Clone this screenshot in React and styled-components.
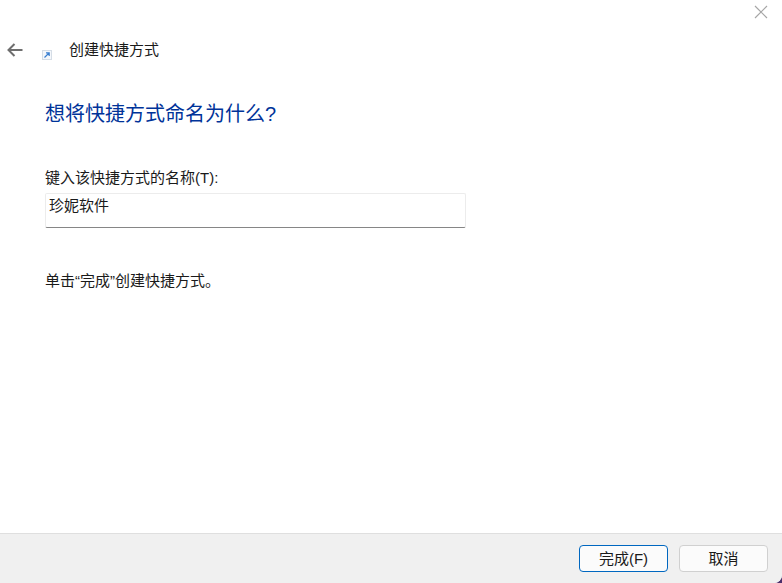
import styled, { createGlobalStyle } from 'styled-components';

const Global = createGlobalStyle`
  html, body {
    margin: 0;
    padding: 0;
    background: #4a2f6b;
  }
  body {
    font-family: "Liberation Sans", "Noto Sans CJK SC", sans-serif;
    color: #1a1a1a;
  }
`;

const Window = styled.div`
  width: 782px;
  height: 583px;
  display: flex;
  flex-direction: column;
  overflow: hidden;
  background: #fff;
  border-bottom-right-radius: 8px;
`;

const TitleBar = styled.div`
  height: 24px;
  display: flex;
  justify-content: flex-end;
  padding: 5px 14px 0 0;
  box-sizing: border-box;
`;

const CloseButton = styled.button`
  border: none;
  background: none;
  padding: 0;
  width: 14px;
  height: 14px;
  display: block;
  svg {
    display: block;
  }
`;

const Header = styled.div`
  height: 24px;
  margin-top: 14px;
  display: flex;
  align-items: center;
  padding-left: 7px;
`;

const BackButton = styled.button`
  border: none;
  background: none;
  padding: 0;
  width: 16px;
  height: 16px;
  svg {
    display: block;
  }
`;

const ShortcutIcon = styled.svg`
  margin: 10px 0 0 19px;
  width: 10px;
  height: 10px;
`;

const HeaderTitle = styled.span`
  margin-left: 17px;
  font-size: 15px;
  line-height: 24px;
`;

const Content = styled.div`
  flex: 1;
  display: flex;
  flex-direction: column;
  padding: 0 0 0 45px;
`;

const Heading = styled.h1`
  margin: 37px 0 0;
  font-size: 20px;
  font-weight: 400;
  line-height: 30px;
  color: #003399;
`;

const FieldLabel = styled.label`
  margin-top: 38px;
  font-size: 15px;
  line-height: 22px;
`;

const NameInput = styled.input`
  margin-top: 4px;
  width: 421px;
  height: 35px;
  box-sizing: border-box;
  border: 1px solid #ececec;
  border-bottom: 1px solid #868686;
  border-radius: 2px;
  padding: 0 0 13px 3px;
  font: inherit;
  font-size: 15px;
  color: #1a1a1a;
  background: #fff;
  outline: none;
`;

const Hint = styled.p`
  margin: 42px 0 0;
  font-size: 15px;
  line-height: 22px;
`;

const Footer = styled.div`
  height: 50px;
  box-sizing: border-box;
  border-top: 1px solid #dfdfdf;
  background: #f0f0f0;
  display: flex;
  justify-content: flex-end;
  gap: 11px;
  padding: 11px 14px 0 0;
`;

const DialogButton = styled.button`
  width: 89px;
  height: 27px;
  box-sizing: border-box;
  padding: 0 0 2px;
  background: #fbfbfb;
  border: 1px solid ${({ $primary }) => ($primary ? '#0067c0' : '#d0d0d0')};
  border-radius: 4px;
  font: inherit;
  font-size: 15px;
  color: #1a1a1a;
`;

export default function App() {
  return (
    <Window>
      <Global />
      <TitleBar>
        <CloseButton aria-label="关闭">
          <svg width="14" height="14" viewBox="0 0 14 14">
            <path d="M1 1l12 12M13 1L1 13" stroke="#a6a6a6" strokeWidth="1.2" fill="none" />
          </svg>
        </CloseButton>
      </TitleBar>
      <Header>
        <BackButton aria-label="返回">
          <svg width="16" height="16" viewBox="0 0 16 16">
            <path d="M15.5 8H1.5M7.5 2L1.5 8l6 6" stroke="#6e6e6e" strokeWidth="2" fill="none" />
          </svg>
        </BackButton>
        <ShortcutIcon viewBox="0 0 10 10">
          <rect x="0.5" y="0.5" width="9" height="9" fill="#f4f7fb" stroke="#d5dde6" />
          <path d="M2.5 7.5L7 3M4 2.8h3.2V6" stroke="#3a7fd0" strokeWidth="1.2" fill="none" />
        </ShortcutIcon>
        <HeaderTitle>创建快捷方式</HeaderTitle>
      </Header>
      <Content>
        <Heading>想将快捷方式命名为什么?</Heading>
        <FieldLabel>键入该快捷方式的名称(T):</FieldLabel>
        <NameInput defaultValue="珍妮软件" />
        <Hint>单击“完成”创建快捷方式。</Hint>
      </Content>
      <Footer>
        <DialogButton $primary>完成(F)</DialogButton>
        <DialogButton>取消</DialogButton>
      </Footer>
    </Window>
  );
}
